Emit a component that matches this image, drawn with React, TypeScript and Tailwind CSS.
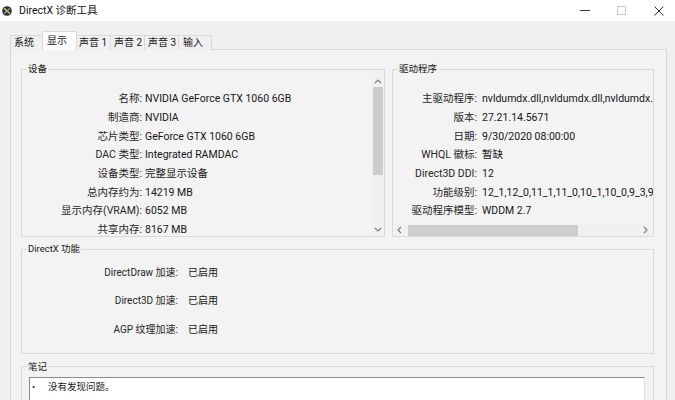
import React from "react";

const leftRows: [string, string][] = [
  ["名称", "NVIDIA GeForce GTX 1060 6GB"],
  ["制造商", "NVIDIA"],
  ["芯片类型", "GeForce GTX 1060 6GB"],
  ["DAC 类型", "Integrated RAMDAC"],
  ["设备类型", "完整显示设备"],
  ["总内存约为", "14219 MB"],
  ["显示内存(VRAM)", "6052 MB"],
  ["共享内存", "8167 MB"],
];

const rightRows: [string, string][] = [
  ["主驱动程序", "nvldumdx.dll,nvldumdx.dll,nvldumdx.dll,nvldumdx.dll"],
  ["版本", "27.21.14.5671"],
  ["日期", "9/30/2020 08:00:00"],
  ["WHQL 徽标", "暂缺"],
  ["Direct3D DDI", "12"],
  ["功能级别", "12_1,12_0,11_1,11_0,10_1,10_0,9_3,9_2,9_1"],
  ["驱动程序模型", "WDDM 2.7"],
];

const dxRows: [string, string][] = [
  ["DirectDraw 加速", "已启用"],
  ["Direct3D 加速", "已启用"],
  ["AGP 纹理加速", "已启用"],
];

function Chevron({ dir }: { dir: "up" | "down" | "left" | "right" }) {
  const pts = {
    up: "1,5 4,2 7,5",
    down: "1,2 4,5 7,2",
    left: "5,1 2,4 5,7",
    right: "2,1 5,4 2,7",
  }[dir];
  return (
    <svg width="8" height="8" viewBox="0 0 8 8">
      <polyline points={pts} fill="none" stroke="#7a7a7a" strokeWidth="1.1" />
    </svg>
  );
}

function DxIcon() {
  return (
    <svg width="10" height="10" viewBox="0 0 10 10">
      <circle cx="5" cy="5" r="4.8" fill="#2a2d3a" />
      <path d="M2.2 2.4 C4 4.2 6 5.8 7.8 7.6" stroke="#c9d62e" strokeWidth="1.6" fill="none" />
      <path d="M7.8 2.4 C6 4.2 4 5.8 2.2 7.6" stroke="#9aa1ad" strokeWidth="1.4" fill="none" />
    </svg>
  );
}

export default function App() {
  const font = "font-['Roboto','Noto_Sans_CJK_SC',sans-serif]";
  return (
    <div className={`w-[675px] h-[400px] overflow-hidden bg-[#f0f0f0] text-[#161616] ${font}`}>
      {/* Title bar */}
      <div className="h-[21px] bg-white flex items-center">
        <div className="ml-[2px] mt-[1px] flex items-center">
          <DxIcon />
        </div>
        <span className="ml-[7px] text-[10.5px] leading-[14px] text-[#111]">DirectX 诊断工具</span>
        <div className="ml-auto mr-[-2px] flex items-center h-full">
          <div className="w-[37px] h-full flex items-center justify-center">
            <div className="w-[10px] h-[1px] bg-[#333]" />
          </div>
          <div className="w-[37px] h-full flex items-center justify-center">
            <div className="w-[9px] h-[9px] border border-[#c8c8c8]" />
          </div>
          <div className="w-[37px] h-full flex items-center justify-center">
            <svg width="10" height="10" viewBox="0 0 10 10">
              <path d="M0.5 0.5 L9.5 9.5 M9.5 0.5 L0.5 9.5" stroke="#333" strokeWidth="1" />
            </svg>
          </div>
        </div>
      </div>

      <div className="pl-[10px] pt-[10px]">
        {/* Tabs */}
        <div className="flex items-end h-[19px] mb-[-1px] relative z-10 text-[10px] leading-[14px]">
          <div className="w-[33px] h-[15px] border border-b-0 border-[#d9d9d9] bg-[#f0f0f0] pl-[3px] flex items-center">系统</div>
          <div className="w-[35px] h-[19px] border border-b-0 border-[#d9d9d9] bg-[#fcfcfc] pl-[4px] flex items-center -ml-[1px] -mr-[1px] relative z-10">显示</div>
          <div className="w-[35px] h-[15px] border border-b-0 border-l-0 border-[#d9d9d9] bg-[#f0f0f0] pl-[3px] flex items-center">声音 1</div>
          <div className="w-[34px] h-[15px] border border-b-0 border-l-0 border-[#d9d9d9] bg-[#f0f0f0] pl-[3px] flex items-center">声音 2</div>
          <div className="w-[34px] h-[15px] border border-b-0 border-l-0 border-[#d9d9d9] bg-[#f0f0f0] pl-[3px] flex items-center">声音 3</div>
          <div className="w-[33px] h-[15px] border border-b-0 border-l-0 border-[#d9d9d9] bg-[#f0f0f0] pl-[4px] flex items-center">输入</div>
        </div>

        {/* Panel */}
        <div className="w-[657px] h-[360px] border border-[#d9d9d9] bg-[#f3f3f3] pl-[10px] pr-[12px] pt-[12px]">
          <div className="flex gap-[7px]">
            {/* 设备 */}
            <fieldset className="w-[364px] border border-[#dadada]">
              <legend className="ml-[5px] px-[1px] text-[9.5px] leading-[14px]">设备</legend>
              <div className="h-[160px] flex">
                <div className="flex-1 overflow-hidden pt-[13.7px] text-[10.5px]">
                  {leftRows.map(([k, v]) => (
                    <div key={k} className="h-[18.7px] flex items-center whitespace-nowrap">
                      <div className="w-[120px] text-right text-[#262626]">{k}:</div>
                      <div className="ml-[3px]">{v}</div>
                    </div>
                  ))}
                </div>
                <div className="w-[11px] mr-[1px] h-full bg-[#f0f0f0] flex flex-col items-center">
                  <div className="h-[11px] flex items-center justify-center"><Chevron dir="up" /></div>
                  <div className="w-[10px] h-[88px] bg-[#cdcdcd]" />
                  <div className="flex-1" />
                  <div className="h-[12px] flex items-center justify-center"><Chevron dir="down" /></div>
                </div>
              </div>
            </fieldset>

            {/* 驱动程序 */}
            <fieldset className="flex-1 min-w-0 border border-[#dadada]">
              <legend className="ml-[5px] px-[1px] text-[9.5px] leading-[14px]">驱动程序</legend>
              <div className="h-[160px] flex flex-col">
                <div className="flex-1 overflow-hidden pt-[13.7px] text-[10.5px]">
                  {rightRows.map(([k, v]) => (
                    <div key={k} className="h-[18.7px] flex items-center whitespace-nowrap">
                      <div className="w-[84px] shrink-0 text-right text-[#262626]">{k}:</div>
                      <div className="ml-[5px]">{v}</div>
                    </div>
                  ))}
                </div>
                <div className="h-[12px] flex items-center bg-[#f0f0f0] mx-[1px]">
                  <div className="w-[12px] flex items-center justify-center"><Chevron dir="left" /></div>
                  <div className="w-[170px] h-[11px] bg-[#cdcdcd] ml-[2px]" />
                  <div className="flex-1" />
                  <div className="w-[12px] flex items-center justify-center"><Chevron dir="right" /></div>
                </div>
              </div>
            </fieldset>
          </div>

          {/* DirectX 功能 */}
          <fieldset className="mt-[5px] border border-[#dadada]">
            <legend className="ml-[5px] px-[1px] text-[9.5px] leading-[14px]">DirectX 功能</legend>
            <div className="pt-[2px] pb-[9px] text-[10px]">
              {dxRows.map(([k, v]) => (
                <div key={k} className="h-[28.5px] flex items-center whitespace-nowrap">
                  <div className="w-[156px] text-right text-[#262626]">{k}:</div>
                  <div className="ml-[10px]">{v}</div>
                </div>
              ))}
            </div>
          </fieldset>

          {/* 笔记 */}
          <fieldset className="mt-[6px] h-[60px] border border-[#dadada]">
            <legend className="ml-[5px] px-[1px] text-[9.5px] leading-[14px]">笔记</legend>
            <div className="mt-[3px] ml-[7px] mr-[8px] h-[40px] bg-white border border-[#e3e3e3] border-t-[#8a8a8a] border-l-[#8a8a8a] pt-[2px] text-[9.5px] leading-[14px] flex">
              <span className="ml-[2px] w-[16px]">•</span>
              <span>没有发现问题。</span>
            </div>
          </fieldset>
        </div>
      </div>
    </div>
  );
}
